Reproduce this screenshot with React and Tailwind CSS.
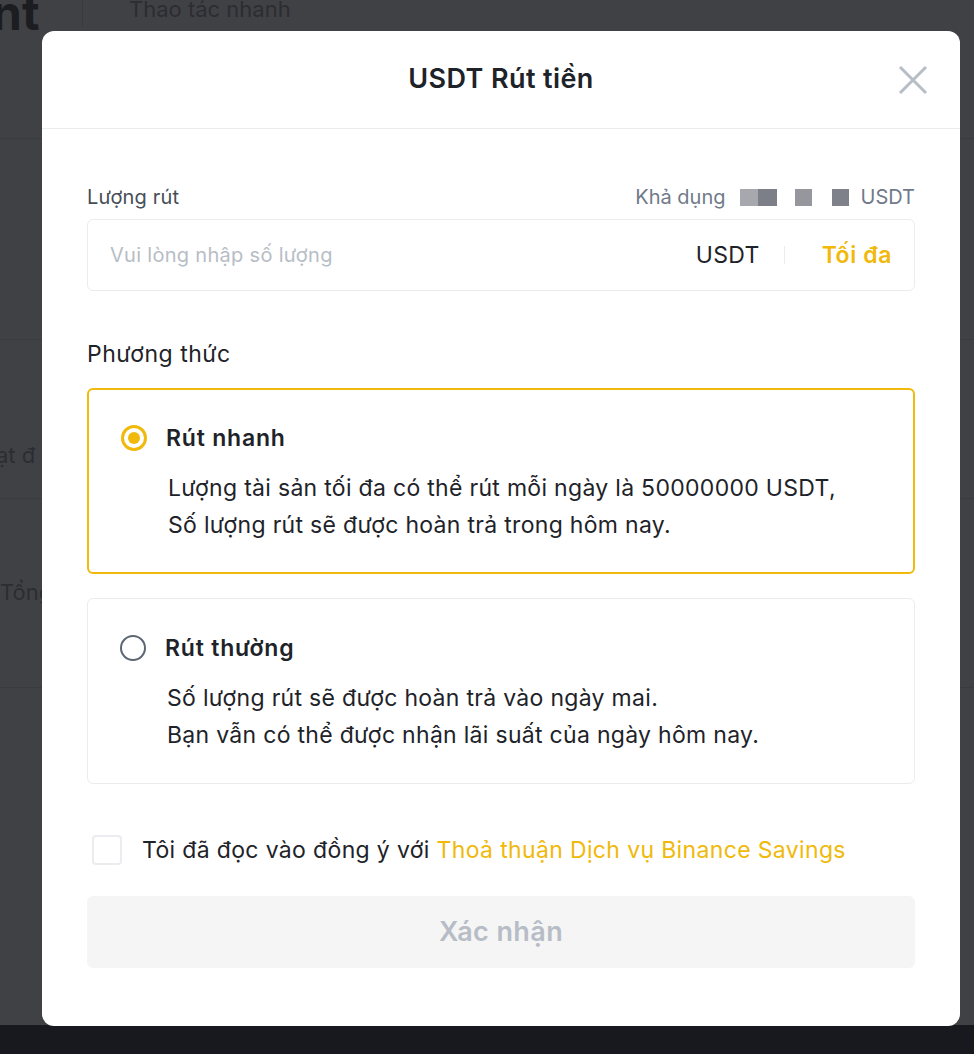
import React from "react";

const font = { fontFamily: 'Inter, "Noto Sans", "Liberation Sans", sans-serif' };

function Radio({ checked }) {
  return checked ? (
    <span className="flex h-[26px] w-[26px] shrink-0 items-center justify-center rounded-full border-[3px] border-[#f0b90b]">
      <span className="h-[12px] w-[12px] rounded-full bg-[#f0b90b]" />
    </span>
  ) : (
    <span className="h-[26px] w-[26px] shrink-0 rounded-full border-2 border-[#5e6673]" />
  );
}

function Option({ checked, title, lines }) {
  return (
    <div
      className={
        "rounded-[6px] pl-[32px] pr-6 " +
        (checked
          ? "border-2 border-[#f0b90b] pt-[30px] pb-[28px]"
          : "border border-[#eaecef] pt-[31px] pb-[29px]")
      }
    >
      <div className="flex h-[36px] items-center gap-[19px]">
        <Radio checked={checked} />
        <span className="text-[23px] font-semibold tracking-[0.8px] text-[#1e2329]">{title}</span>
      </div>
      <div className="mt-[14px] pl-[47px] text-[23px] leading-[37px] tracking-[0.3px] text-[#1e2329]">
        {lines.map((l, i) => (
          <div key={i}>{l}</div>
        ))}
      </div>
    </div>
  );
}

export default function App() {
  return (
    <div className="relative h-[1054px] w-[974px] overflow-hidden bg-[#404145]" style={font}>
      {/* dimmed background page */}
      <div className="flex h-[1025px] flex-col">
        <div className="flex h-[32px] items-start">
          <div className="w-[83px] border-r border-[#38393d] text-[48px] font-bold leading-[26px] text-[#1c1d20]">
            <span className="-ml-[8px] block">nt</span>
          </div>
          <div className="pl-[46px] text-[22px] leading-[18px] text-[#2c2d31]">Thao tác nhanh</div>
        </div>
        <div className="mt-[106px] h-px bg-[#3a3b3f]" />
        <div className="mt-[200px] h-px bg-[#3a3b3f]" />
        <div className="mt-[100px] text-[22px] leading-[30px] text-[#2c2d31]">
          <span className="-ml-[4px]">ạt đ</span>
        </div>
        <div className="mt-[28px] h-px bg-[#3a3b3f]" />
        <div className="mt-[78px] text-[22px] leading-[30px] text-[#2c2d31]">Tổng</div>
        <div className="mt-[80px] h-px bg-[#3a3b3f]" />
      </div>
      <div className="h-[29px] bg-[#17191e]" />

      {/* modal overlay */}
      <div className="absolute left-[42px] top-[31px] flex h-[995px] w-[918px] flex-col rounded-[12px] bg-white">
        <div className="relative flex h-[98px] shrink-0 items-center justify-center border-b border-[#eaecef]">
          <span className="text-[27px] font-semibold tracking-[0.4px] text-[#1e2329]">USDT Rút tiền</span>
          <svg
            className="absolute right-[32px] top-[34px]"
            width="30"
            height="30"
            viewBox="0 0 30 30"
            fill="none"
            stroke="#b7bdc6"
            strokeWidth="3"
          >
            <path d="M2 2 L28 28 M28 2 L2 28" />
          </svg>
        </div>

        <div className="flex flex-col px-[45px] pt-[54px]">
          <div className="flex h-[28px] items-center justify-between">
            <span className="text-[20px] tracking-[0.2px] text-[#474d57]">Lượng rút</span>
            <div className="flex items-center text-[20px] text-[#707a8a]">
              <span className="mr-[14px]">Khả dụng</span>
              <span className="h-[17px] w-[18px] bg-[#a7a8ae]" />
              <span className="h-[17px] w-[19px] bg-[#7c7f87]" />
              <span className="ml-[18px] h-[17px] w-[17px] bg-[#95979d]" />
              <span className="ml-[20px] h-[17px] w-[17px] bg-[#7e8189]" />
              <span className="ml-[12px]">USDT</span>
            </div>
          </div>

          <div className="mt-[8px] flex h-[72px] items-center rounded-[6px] border border-[#eaecef] pl-[22px] pr-[22px]">
            <span className="flex-1 text-[20px] tracking-[0.3px] text-[#b7bdc6]">Vui lòng nhập số lượng</span>
            <span className="text-[23px] tracking-[0.3px] text-[#1e2329]">USDT</span>
            <span className="ml-[24px] mr-[37px] h-[18px] w-px bg-[#eaecef]" />
            <span className="text-[23px] font-semibold tracking-[0.6px] text-[#f0b90b]">Tối đa</span>
          </div>

          <div className="mt-[46px] text-[23px] leading-[34px] tracking-[0.5px] text-[#1e2329]">Phương thức</div>

          <div className="mt-[17px]">
            <Option
              checked
              title="Rút nhanh"
              lines={[
                "Lượng tài sản tối đa có thể rút mỗi ngày là 50000000 USDT,",
                "Số lượng rút sẽ được hoàn trả trong hôm nay.",
              ]}
            />
          </div>
          <div className="mt-[24px]">
            <Option
              title="Rút thường"
              lines={[
                "Số lượng rút sẽ được hoàn trả vào ngày mai.",
                "Bạn vẫn có thể được nhận lãi suất của ngày hôm nay.",
              ]}
            />
          </div>

          <div className="mt-[51px] flex h-[30px] items-center pl-[5px]">
            <span className="h-[30px] w-[30px] shrink-0 rounded-[4px] border-2 border-[#eaecef]" />
            <span className="ml-[20px] text-[23px] tracking-[0.35px] text-[#1e2329]">
              Tôi đã đọc vào đồng ý với{" "}
              <span className="text-[#f0b90b]">Thoả thuận Dịch vụ Binance Savings</span>
            </span>
          </div>

          <div className="mt-[31px] flex h-[72px] items-center justify-center rounded-[6px] bg-[#f5f5f5]">
            <span className="text-[27px] font-semibold tracking-[0.4px] text-[#b7bdc6]">Xác nhận</span>
          </div>
        </div>
      </div>
    </div>
  );
}
